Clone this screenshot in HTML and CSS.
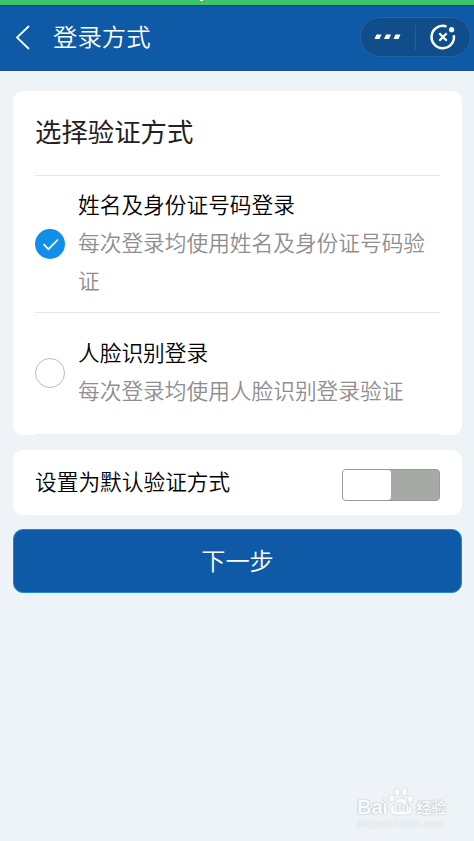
FILE: index.html
```html
<!DOCTYPE html>
<html lang="zh-CN">
<head>
    <meta charset="UTF-8">
    <meta name="viewport" content="width=device-width, initial-scale=1.0">
    <title>登录方式</title>
    <link rel="stylesheet" href="styles.css">
</head>
<body>
    <!-- 顶部状态条 -->
    <div class="status"><i></i></div>
    <div class="header">
        <svg class="back" width="16" height="26" viewBox="0 0 16 26">
            <path d="M14 2L2 13.500L14 25" fill="none" stroke="#fff" stroke-width="1.8"/>
        </svg>
        <h1>登录方式</h1>
        <!-- 小程序胶囊按钮 -->
        <div class="capsule">
            <svg class="more" width="28" height="6" viewBox="0 0 28 6">
                <path d="M2.500 .5h5l-2 4.500h-5zM12 .5h5l-2 4.500h-5zM21.500 .5h5l-2 4.500h-5z" fill="#fff"/>
            </svg>
            <div class="line"></div>
            <svg class="close" width="28" height="28" viewBox="0 0 28 28">
                <path d="M17.500 3.500A11.200 11.200 0 1 0 24.800 12.200" fill="none" stroke="#fff" stroke-width="2.500"/>
                <circle cx="22.600" cy="6.700" r="2.600" fill="#fff"/>
                <path d="M10.300 10.300l7.400 7.400M17.700 10.300l-7.400 7.400" stroke="#fff" stroke-width="2.200"/>
            </svg>
        </div>
    </div>
    <div class="main">
        <div class="card methods">
            <h2>选择验证方式</h2>
            <div class="item">
                <div class="radio checked">
                    <svg width="30" height="30" viewBox="0 0 30 30">
                        <path d="M8.500 15.200l5 5L23 10.500" fill="none" stroke="#fff" stroke-width="1.700"/>
                    </svg>
                </div>
                <div class="text">
                    <h3>姓名及身份证号码登录</h3>
                    <p>每次登录均使用姓名及身份证号码验证</p>
                </div>
            </div>
            <div class="item face">
                <div class="radio"></div>
                <div class="text">
                    <h3>人脸识别登录</h3>
                    <p>每次登录均使用人脸识别登录验证</p>
                </div>
            </div>
        </div>
        <div class="card default">
            <span>设置为默认验证方式</span>
            <div class="switch"><i></i></div>
        </div>
        <button class="next">下一步</button>
    </div>
    <!-- 右下角水印 -->
    <div class="watermark">
        <div class="logo">
            <span>Bai</span>
            <div class="paw">
                <svg width="26" height="29" viewBox="0 0 26 29">
                    <g fill="#fafcfd" stroke="#d5dadd" stroke-width=".8">
                        <ellipse cx="3.800" cy="11.500" rx="2.800" ry="3.700"/>
                        <ellipse cx="9.300" cy="5" rx="2.900" ry="4"/>
                        <ellipse cx="16.500" cy="5" rx="2.900" ry="4"/>
                        <ellipse cx="22.300" cy="12" rx="2.800" ry="3.700"/>
                        <path d="M13 11C9 11 8 15 5 18C0 22 2 28 8 28H18C25 28 26 22 21 18C18 15 17 11 13 11z"/>
                    </g>
                </svg>
                <b>du</b>
            </div>
            <span class="cn">经验</span>
        </div>
        <div class="site">jingyan.baidu.com</div>
    </div>
</body>
</html>
```
FILE: styles.css
```css
* {
    box-sizing: border-box;
    margin: 0;
    padding: 0;
}
body {
    height: 841px;
    background-color: #edf3f7;
    font-family: "Noto Sans CJK SC", sans-serif;
    font-weight: 350;
    overflow: hidden;
}
h1, h2, h3 {
    font-weight: 350;
}
svg {
    display: block;
}
.status {
    height: 6px;
    background-color: #3cc469;
    border-bottom: 1px solid #173f70;
}
.status i {
    display: block;
    width: 3px;
    height: 1px;
    margin-left: 200px;
    background-color: #fff;
}
.header {
    display: flex;
    align-items: center;
    height: 65px;
    padding: 0 3px 2px 15px;
    background-color: #0e5aa6;
    border-bottom: 1px solid #1d5590;
}
.header h1 {
    margin-left: 22px;
    padding-bottom: 3px;
    font-size: 24.4px;
    line-height: 36px;
    color: #fff;
}
.capsule {
    display: flex;
    align-items: center;
    width: 111px;
    height: 40px;
    margin-left: auto;
    padding-left: 13px;
    border: 1px solid #22649f;
    border-radius: 20px;
    background-color: #104e8b;
}
.capsule .line {
    width: 1px;
    height: 25px;
    margin: 0 13px;
    background-color: #22629b;
}
.main {
    padding: 20px 12px 0 13px;
}
.card {
    border-radius: 10px;
    background-color: #fff;
}
.methods {
    height: 344px;
    padding: 0 22px;
}
.methods h2 {
    height: 84px;
    font-size: 26.4px;
    font-weight: 400;
    line-height: 79px;
    color: #222;
}
.item {
    display: flex;
    align-items: center;
    height: 137px;
    border-top: 1px solid #e6e6e6;
}
.item.face {
    height: 123px;
    padding-bottom: 2px;
    border-bottom: 1px solid #edf1f3;
}
.radio {
    flex: none;
    width: 30px;
    height: 30px;
    margin-right: 13px;
    border: 1px solid #bbb;
    border-radius: 50%;
}
.radio.checked {
    border: none;
    background-color: #108ee9;
}
.text {
    padding-bottom: 4px;
}
.text h3,
.text p {
    font-size: 21.7px;
    line-height: 38px;
    color: #000;
}
.text p {
    color: #8e8e8e;
}
.default {
    display: flex;
    align-items: center;
    justify-content: space-between;
    height: 65px;
    margin-top: 15px;
    padding: 0 22px;
    font-size: 21.7px;
    color: #000;
}
.default span {
    padding-bottom: 4px;
}
.switch {
    width: 98px;
    height: 32px;
    margin-top: 4px;
    border: 1px solid #999b98;
    border-radius: 4px;
    background-color: #a5aaa5;
}
.switch i {
    display: block;
    width: 48px;
    height: 30px;
    border-radius: 3px;
    background-color: #fff;
}
.next {
    display: block;
    width: 100%;
    height: 64px;
    margin-top: 14px;
    padding-bottom: 4px;
    border: 1px solid #218acb;
    border-radius: 10px;
    background-color: #0e5aa6;
    font-family: inherit;
    font-size: 24.2px;
    font-weight: 350;
    color: #fff;
}
.watermark {
    position: absolute;
    left: 357px;
    top: 787px;
    width: 92px;
    font-family: "Liberation Sans", "Noto Sans CJK SC", sans-serif;
    color: #fafcfd;
    text-shadow: 0 0 1px #9ca3a8, 0 0 2px #c9ced1;
}
.logo {
    display: flex;
    align-items: flex-end;
    height: 29px;
    font-size: 20px;
    font-weight: 700;
    line-height: 17px;
}
.logo .paw {
    position: relative;
}
.logo b {
    position: absolute;
    left: 6px;
    top: 13px;
    font-size: 12px;
    line-height: 14px;
}
.logo .cn {
    margin-left: 2px;
    font-size: 15px;
}
.site {
    font-size: 10.8px;
    font-weight: 400;
    line-height: 15px;
    color: #f8fbfc;
    text-shadow: 0 0 1px #b4babe;
}
```
